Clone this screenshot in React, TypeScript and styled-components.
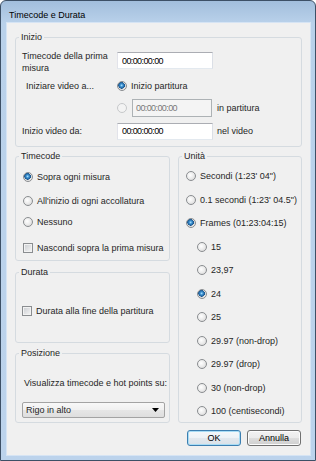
import React from 'react'
import styled, { createGlobalStyle } from 'styled-components'

const GlobalStyle = createGlobalStyle`
  html, body {
    margin: 0;
    padding: 0;
    background: #ffffff;
  }
  body {
    font-family: "Liberation Sans", Arial, sans-serif;
    font-size: 9px;
    color: #262626;
  }
  * {
    box-sizing: border-box;
  }
`

const Window = styled.div`
  width: 316px;
  height: 461px;
  border: 1px solid #3d5066;
  border-radius: 6px 6px 0 0;
  background: linear-gradient(180deg, #a2bedc 0%, #b9d1ea 22px, #bcd3ec 100%);
  display: flex;
  flex-direction: column;
  overflow: hidden;
`

const TitleBar = styled.div`
  flex: none;
  height: 22px;
  padding: 8px 0 0 8px;
  line-height: 12px;
  color: #000000;
`

const Frame = styled.div`
  flex: 1;
  display: flex;
  padding: 0 5px 5px 6px;
`

const Client = styled.div`
  flex: 1;
  display: flex;
  flex-direction: column;
  background: #f0f0f0;
  box-shadow: 0 0 0 1px #d6e4f4;
  padding: 8px 8px 0 8px;
`

const Group = styled.fieldset`
  margin: 0;
  padding: 0;
  min-width: 0;
  border: 1px solid #d5dbe0;
  border-radius: 3px;
`

const Legend = styled.legend`
  margin-left: 3px;
  padding: 0 2px;
  line-height: 12px;
`

const StartGrid = styled.div`
  display: grid;
  grid-template-columns: 91px 96px auto;
  grid-template-rows: 24px 16px 20px 18px;
  column-gap: 4px;
  row-gap: 4px;
  align-items: center;
  padding: 7px 6px 6px 6px;
`

const Label = styled.span<{ $indent?: number; $top?: boolean }>`
  line-height: 12px;
  padding-left: ${p => p.$indent ?? 0}px;
  align-self: ${p => (p.$top ? 'start' : 'center')};
`

const TextBox = styled.input<{ $w?: number; $top?: boolean }>`
  width: ${p => p.$w ?? 96}px;
  height: 17px;
  margin: ${p => (p.$top ? '2px 0 0 0' : '0')};
  align-self: ${p => (p.$top ? 'start' : 'center')};
  padding: 0 0 0 4px;
  border: 1px solid;
  border-color: #abadb3 #dbdfe6 #e3e9ef #e2e3ea;
  background: #ffffff;
  color: #000000;
  font-family: "Liberation Sans", Arial, sans-serif;
  font-size: 9px;
  letter-spacing: -0.6px;
  outline: none;

  &:disabled {
    height: 18px;
    margin-left: 1px;
    padding-left: 3px;
    border-color: #adb2b5;
    background: #f4f4f4;
    color: #7a7a7a;
  }
`

const Cell = styled.div<{ $span?: number }>`
  display: flex;
  align-items: center;
  gap: 4px;
  grid-column: span ${p => p.$span ?? 1};
`

const Radio = styled.span<{ $checked?: boolean; $disabled?: boolean }>`
  flex: none;
  width: 10px;
  height: 10px;
  border-radius: 50%;
  border: 1px solid ${p => (p.$disabled ? '#c6c8ca' : '#8a8d90')};
  background: ${p =>
    p.$checked
      ? 'radial-gradient(circle at 45% 42%, #aee4ff 0, #3f93d2 1.4px, #17538c 3.2px, #dcdcdc 3.4px, #fafafa 100%)'
      : p.$disabled
        ? '#f3f3f3'
        : 'radial-gradient(circle at 40% 40%, #ffffff 0, #e9e9e9 55%, #cdcdcd 100%)'};
`

const Check = styled.span`
  flex: none;
  width: 10px;
  height: 10px;
  border: 1px solid #8a8d90;
  background: linear-gradient(135deg, #c9ccd0 0%, #f6f6f6 100%);
  box-shadow: inset 0 0 0 1px #f2f2f2;
`

const Lower = styled.div`
  display: grid;
  grid-template-columns: 155px 124px;
  column-gap: 8px;
  margin-top: 3px;
`

const Column = styled.div`
  display: flex;
  flex-direction: column;
`

const Stack = styled.div<{ $pad: string; $gap?: number }>`
  display: flex;
  flex-direction: column;
  gap: ${p => p.$gap ?? 0}px;
  padding: ${p => p.$pad};
`

const Option = styled.div<{ $indent?: number; $mt?: number }>`
  display: flex;
  align-items: center;
  gap: 4px;
  height: 14px;
  padding-left: ${p => p.$indent ?? 0}px;
  margin-top: ${p => p.$mt ?? 0}px;
  white-space: nowrap;
`

const Spaced = styled.div<{ $mt: number }>`
  margin-top: ${p => p.$mt}px;
`

const Select = styled.div`
  width: 143px;
  height: 16px;
  display: flex;
  align-items: center;
  justify-content: space-between;
  padding: 0 5px 0 3px;
  border: 1px solid #a3a3a3;
  border-radius: 2px;
  background: linear-gradient(180deg, #f8f8f8 0%, #f0f0f0 50%, #e6e6e6 51%, #dedede 100%);
  line-height: 12px;
`

const Buttons = styled.div`
  display: flex;
  justify-content: flex-end;
  gap: 6px;
  margin-top: 7px;
  padding-right: 1px;
`

const Button = styled.button<{ $default?: boolean }>`
  width: 54px;
  height: 16px;
  padding: 0;
  font-family: "Liberation Sans", Arial, sans-serif;
  font-size: 9px;
  color: #000000;
  border: 1px solid ${p => (p.$default ? '#3c7fb1' : '#707070')};
  border-radius: 3px;
  background: ${p =>
    p.$default
      ? 'linear-gradient(180deg, #f4f8fb 0%, #edf2f6 50%, #e2e8ee 51%, #d9e1e8 100%)'
      : 'linear-gradient(180deg, #f2f2f2 0%, #ebebeb 50%, #dddddd 51%, #cfcfcf 100%)'};
  box-shadow: inset 0 0 0 1px ${p => (p.$default ? '#a8dcf5' : '#fcfcfc')};
`

const frameRates = [
  { label: '15' },
  { label: '23,97' },
  { label: '24', checked: true },
  { label: '25' },
  { label: '29.97 (non-drop)' },
  { label: '29.97 (drop)' },
  { label: '30 (non-drop)' },
  { label: '100 (centisecondi)' },
]

const Arrow = () => (
  <svg width="7" height="4" viewBox="0 0 7 4">
    <path d="M0 0 L7 0 L3.5 4 Z" fill="#000000" />
  </svg>
)

export default function App() {
  return (
    <>
      <GlobalStyle />
      <Window>
        <TitleBar>Timecode e Durata</TitleBar>
        <Frame>
          <Client>
            <Group>
              <Legend>Inizio</Legend>
              <StartGrid>
                <Label $top>Timecode della prima misura</Label>
                <TextBox $top readOnly value='00:00:00:00' />
                <span />

                <Label $indent={4}>Iniziare video a...</Label>
                <Cell $span={2}>
                  <Radio $checked />
                  <span>Inizio partitura</span>
                </Cell>

                <span />
                <Cell>
                  <Radio $disabled />
                  <TextBox $w={80} disabled readOnly value='00:00:00:00' />
                </Cell>
                <Label>in partitura</Label>

                <Label>Inizio video da:</Label>
                <TextBox readOnly value='00:00:00:00' />
                <Label>nel video</Label>
              </StartGrid>
            </Group>

            <Lower>
              <Column>
                <Group>
                  <Legend>Timecode</Legend>
                  <Stack $pad='8px 0 5px 7px'>
                    <Option>
                      <Radio $checked />
                      <span>Sopra ogni misura</span>
                    </Option>
                    <Option $mt={10}>
                      <Radio />
                      <span>All'inizio di ogni accollatura</span>
                    </Option>
                    <Option $mt={7}>
                      <Radio />
                      <span>Nessuno</span>
                    </Option>
                    <Option $mt={12} $indent={-1}>
                      <Check />
                      <span>Nascondi sopra la prima misura</span>
                    </Option>
                  </Stack>
                </Group>

                <Spaced $mt={5}>
                  <Group>
                    <Legend>Durata</Legend>
                    <Stack $pad='26px 0 24px 6px'>
                      <Option>
                        <Check />
                        <span>Durata alla fine della partitura</span>
                      </Option>
                    </Stack>
                  </Group>
                </Spaced>

                <Spaced $mt={4}>
                  <Group>
                    <Legend>Posizione</Legend>
                    <Stack $pad='18px 0 4px 6px' $gap={13}>
                      <Label>Visualizza timecode e hot points su:</Label>
                      <Select>
                        <span>Rigo in alto</span>
                        <Arrow />
                      </Select>
                    </Stack>
                  </Group>
                </Spaced>
              </Column>

              <Group>
                <Legend>Unità</Legend>
                <Stack $pad='7px 0 4px 7px' $gap={9.5}>
                  <Option>
                    <Radio />
                    <span>Secondi (1:23' 04")</span>
                  </Option>
                  <Option>
                    <Radio />
                    <span>0.1 secondi (1:23' 04.5")</span>
                  </Option>
                  <Option>
                    <Radio $checked />
                    <span>Frames (01:23:04:15)</span>
                  </Option>
                  {frameRates.map(r => (
                    <Option key={r.label} $indent={11}>
                      <Radio $checked={r.checked} />
                      <span>{r.label}</span>
                    </Option>
                  ))}
                </Stack>
              </Group>
            </Lower>

            <Buttons>
              <Button $default>OK</Button>
              <Button>Annulla</Button>
            </Buttons>
          </Client>
        </Frame>
      </Window>
    </>
  )
}
